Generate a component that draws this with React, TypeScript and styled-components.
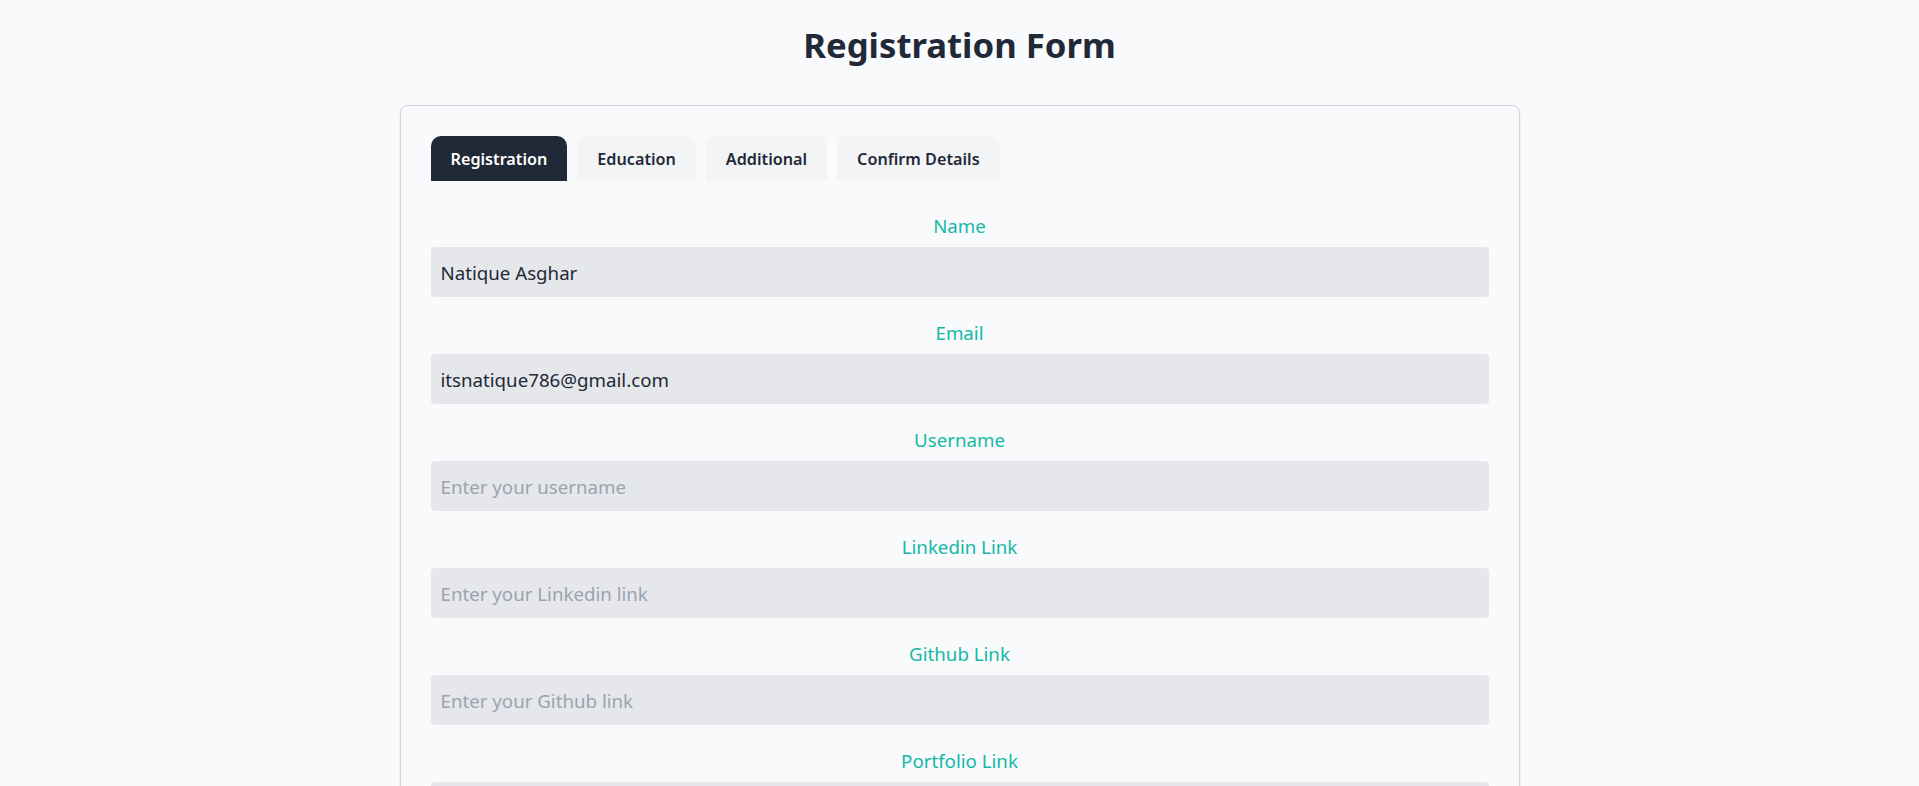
import React from "react";
import styled, { createGlobalStyle } from "styled-components";

const FONT = `"Noto Sans", "Open Sans", sans-serif`;
const TEAL = "#14b8a6";

const GlobalStyle = createGlobalStyle`
  *, *::before, *::after { box-sizing: border-box; }
  html, body { margin: 0; padding: 0; background: #f9fafb; }
  body { font-family: ${FONT}; color: #1f2937; }
  ::-webkit-scrollbar { width: 2px; }
  ::-webkit-scrollbar-track { background: #4b4b4b; }
  ::-webkit-scrollbar-thumb { background: ${TEAL}; }
`;

const Page = styled.main`
  padding: 25px 0 80px;
`;

const Title = styled.h1`
  margin: 0 0 40px;
  text-align: center;
  font-size: 34.7px;
  line-height: 40px;
  font-weight: 700;
  color: #1f2937;
`;

const Card = styled.section`
  max-width: 1120px;
  margin: 0 auto;
  padding: 30px;
  border: 1px solid #d1d5db;
  border-radius: 8px;
  background: #f9fafb;
  box-shadow: 0 1px 3px rgba(0, 0, 0, 0.08), 0 1px 2px rgba(0, 0, 0, 0.04);
`;

const TabBar = styled.nav`
  display: flex;
  gap: 10px;
`;

const Tab = styled.button<{ $active?: boolean }>`
  height: 45px;
  padding: 0 20px;
  border: none;
  border-radius: 10px 10px 0 0;
  font-family: ${FONT};
  font-size: 16.2px;
  font-weight: 600;
  background: ${(p) => (p.$active ? "#1f2937" : "#f3f4f6")};
  color: ${(p) => (p.$active ? "#ffffff" : "#1f2937")};
  cursor: pointer;
`;

const Form = styled.form`
  display: flex;
  flex-direction: column;
  gap: 22px;
  margin-top: 31px;
`;

const Field = styled.div`
  display: flex;
  flex-direction: column;
`;

const Label = styled.label`
  display: block;
  text-align: center;
  font-size: 18.7px;
  line-height: 28px;
  margin-bottom: 7px;
  color: ${TEAL};
`;

const Input = styled.input`
  width: 100%;
  height: 50px;
  padding: 0 10px;
  border: none;
  border-radius: 4px;
  background: #e5e7eb;
  font-family: ${FONT};
  font-size: 18.7px;
  color: #1f2937;
  outline: none;
  &::placeholder { color: #9ca3af; }
`;

const ButtonRow = styled.div`
  display: flex;
  justify-content: flex-end;
  margin-top: 32px;
`;

const NextButton = styled.button`
  height: 48px;
  padding: 0 28px;
  border: none;
  border-radius: 6px;
  background: #1f2937;
  color: #fff;
  font-family: ${FONT};
  font-size: 16px;
  font-weight: 600;
`;

const fields: { label: string; placeholder: string; value?: string; type?: string }[] = [
  { label: "Name", placeholder: "Enter your name", value: "Natique Asghar" },
  { label: "Email", placeholder: "Enter your email", value: "itsnatique786@gmail.com", type: "email" },
  { label: "Username", placeholder: "Enter your username" },
  { label: "Linkedin Link", placeholder: "Enter your Linkedin link" },
  { label: "Github Link", placeholder: "Enter your Github link" },
  { label: "Portfolio Link", placeholder: "Enter your Portfolio link" },
  { label: "Password", placeholder: "Enter your password", type: "password" },
  { label: "Confirm Password", placeholder: "Confirm your password", type: "password" },
  { label: "Phone Number", placeholder: "Enter your phone number" },
  { label: "Date of Birth", placeholder: "Enter your date of birth" },
  { label: "Gender", placeholder: "Enter your gender" },
  { label: "Address", placeholder: "Enter your address" },
  { label: "City", placeholder: "Enter your city" },
  { label: "State", placeholder: "Enter your state" },
  { label: "Country", placeholder: "Enter your country" },
  { label: "Zip Code", placeholder: "Enter your zip code" },
];

const tabs = ["Registration", "Education", "Additional", "Confirm Details"];

export default function App() {
  return (
    <>
      <GlobalStyle />
      <Page>
        <Title>Registration Form</Title>
        <Card>
          <TabBar>
            {tabs.map((t, i) => (
              <Tab key={t} type="button" $active={i === 0}>
                {t}
              </Tab>
            ))}
          </TabBar>
          <Form onSubmit={(e) => e.preventDefault()}>
            {fields.map((f) => (
              <Field key={f.label}>
                <Label>{f.label}</Label>
                <Input type={f.type ?? "text"} placeholder={f.placeholder} defaultValue={f.value} />
              </Field>
            ))}
            <ButtonRow>
              <NextButton type="submit">Next</NextButton>
            </ButtonRow>
          </Form>
        </Card>
      </Page>
    </>
  );
}
